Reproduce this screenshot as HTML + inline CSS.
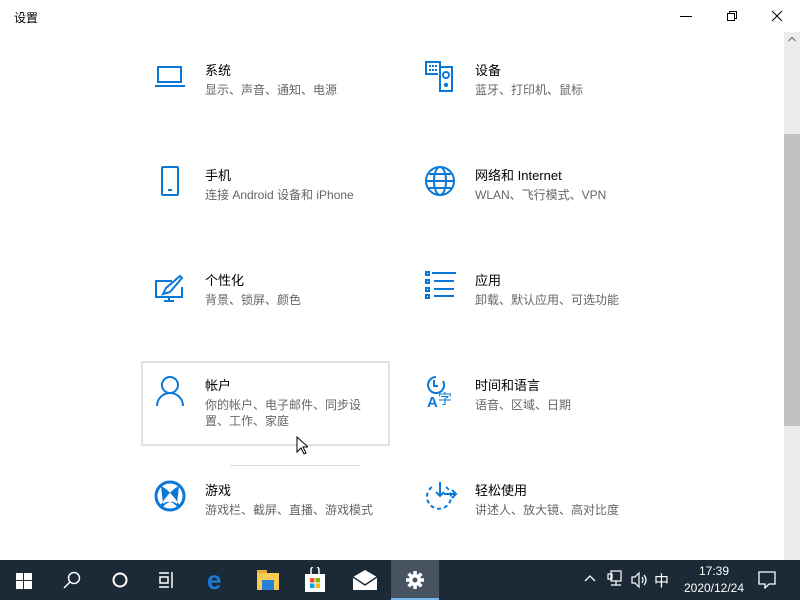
<!DOCTYPE html>
<html><head><meta charset="utf-8"><style>
*{margin:0;padding:0;box-sizing:border-box}
body{width:800px;height:600px;overflow:hidden;background:#fff;font-family:"Liberation Sans","Noto Sans CJK SC",sans-serif;position:relative}
.abs{position:absolute}
.t{font-size:13px;color:#000;line-height:16px}
.s{font-size:12px;color:#666;line-height:16px;margin-top:3px}
.item{position:absolute;width:230px}
svg{position:absolute}
.tb{position:absolute;left:0;top:560px;width:800px;height:40px;background:#1c2a37}
</style></head><body>
<div class="abs" style="left:14px;top:9px;font-size:12px">设置</div>
<div class="abs" style="left:680px;top:16px;width:12px;height:1px;background:#000"></div>
<svg style="left:726px;top:10px" width="12" height="12"><rect x="1.5" y="3.5" width="7" height="7" fill="none" stroke="#000"/><path d="M3.5 3.5V1.5h7v7h-2" fill="none" stroke="#000"/></svg>
<svg style="left:771px;top:10px" width="12" height="12"><path d="M1 1L11 11M11 1L1 11" stroke="#000"/></svg>
<div class="abs" style="left:784px;top:32px;width:16px;height:528px;background:#ebebeb"></div>
<div class="abs" style="left:784px;top:134px;width:16px;height:292px;background:#c1c1c1"></div>
<svg style="left:788px;top:36px" width="8" height="6"><path d="M0.5 5L4 1.5L7.5 5" fill="none" stroke="#666"/></svg>

<div class="abs" style="left:141px;top:361px;width:249px;height:85px;border:2px solid #e2e2e2"></div>

<!-- icons -->
<svg style="left:154px;top:64px" width="32" height="26" fill="none" stroke="#0a78d7" stroke-width="2"><rect x="4" y="3" width="23" height="15"/><path d="M1 22h30"/></svg>
<svg style="left:424px;top:60px" width="32" height="32" fill="none" stroke="#0a78d7" stroke-width="2"><path d="M16 12V2H2v12h12"/><rect x="16" y="7" width="12" height="24"/><circle cx="22" cy="15" r="3"/><circle cx="22" cy="25" r="1.2"/><path d="M5 6h8M5 10h8" stroke-dasharray="2 1"/></svg>
<svg style="left:160px;top:165px" width="20" height="32" fill="none" stroke="#0a78d7" stroke-width="2"><rect x="2" y="2" width="16" height="28" rx="1"/><path d="M8 25h4"/></svg>
<svg style="left:424px;top:165px" width="32" height="32" fill="none" stroke="#0a78d7" stroke-width="2"><circle cx="16" cy="16" r="14"/><ellipse cx="16" cy="16" rx="6" ry="14"/><path d="M2 16h28M5 9h22M5 23h22"/></svg>
<svg style="left:154px;top:274px" width="32" height="30" fill="none" stroke="#0a78d7" stroke-width="2"><path d="M18 7H2v16h26V13"/><path d="M10 27h10M15 23v4"/><path d="M9 20l3-6 14-12 2 2-12 14z"/></svg>
<svg style="left:424px;top:270px" width="32" height="30" fill="none" stroke="#0a78d7" stroke-width="2"><rect x="2" y="2" width="3" height="3"/><rect x="2" y="10" width="3" height="3"/><rect x="2" y="18" width="3" height="3"/><rect x="2" y="25" width="3" height="3"/><path d="M8 3h24M10 11h20M10 19h20M10 26h20"/></svg>
<svg style="left:155px;top:375px" width="30" height="32" fill="none" stroke="#0a78d7" stroke-width="2"><circle cx="15" cy="10" r="8"/><path d="M2 31a13 13 0 0 1 26 0"/></svg>
<svg style="left:424px;top:375px" width="34" height="34"><g fill="none" stroke="#0a78d7" stroke-width="2"><path d="M12 2a8 8 0 1 0 7 4"/><path d="M10 5v6h4"/></g><text x="3" y="32" font-size="15" font-weight="bold" fill="#0a78d7" font-family="Liberation Sans">A</text><text x="14" y="29" font-size="14" fill="#0a78d7" font-family="Noto Sans CJK SC">字</text></svg>
<svg style="left:154px;top:480px" width="32" height="32"><circle cx="16" cy="16" r="14" fill="none" stroke="#0a78d7" stroke-width="3"/><path d="M7 6q9 4 19 20l-2 2q-8-10-15-4zM25 6q-9 4 -19 20l2 2q8-10 15-4z" fill="#0a78d7"/></svg>
<svg style="left:424px;top:480px" width="34" height="32" fill="none" stroke="#0a78d7" stroke-width="2"><path d="M22 7a12 12 0 1 1 -14 0" stroke-dasharray="4 3"/><path d="M16 2v14M12 12l4 4 4-4M20 14h12M28 10l4 4-4 4"/></svg>

<div class="item" style="left:205px;top:63px"><div class="t">系统</div><div class="s">显示、声音、通知、电源</div></div>
<div class="item" style="left:475px;top:63px"><div class="t">设备</div><div class="s">蓝牙、打印机、鼠标</div></div>
<div class="item" style="left:205px;top:168px"><div class="t">手机</div><div class="s">连接 Android 设备和 iPhone</div></div>
<div class="item" style="left:475px;top:168px"><div class="t">网络和 Internet</div><div class="s">WLAN、飞行模式、VPN</div></div>
<div class="item" style="left:205px;top:273px"><div class="t">个性化</div><div class="s">背景、锁屏、颜色</div></div>
<div class="item" style="left:475px;top:273px"><div class="t">应用</div><div class="s">卸载、默认应用、可选功能</div></div>
<div class="item" style="left:205px;top:378px;width:170px"><div class="t">帐户</div><div class="s">你的帐户、电子邮件、同步设置、工作、家庭</div></div>
<div class="item" style="left:475px;top:378px"><div class="t">时间和语言</div><div class="s">语音、区域、日期</div></div>
<div class="item" style="left:205px;top:483px"><div class="t">游戏</div><div class="s">游戏栏、截屏、直播、游戏模式</div></div>
<div class="item" style="left:475px;top:483px"><div class="t">轻松使用</div><div class="s">讲述人、放大镜、高对比度</div></div>
<div class="abs" style="left:230px;top:465px;width:130px;height:1px;background:#ddd"></div>
<svg style="left:296px;top:436px" width="12" height="20"><path d="M1 1v15l4-4 3 6 2-1-3-6h5z" fill="#fff" stroke="#000"/></svg>

<div class="tb">
<svg style="left:16px;top:13px" width="16" height="16" fill="#fff"><rect x="0" y="0" width="7" height="7"/><rect x="8" y="0" width="8" height="7"/><rect x="0" y="8" width="7" height="8"/><rect x="8" y="8" width="8" height="8"/></svg>
<svg style="left:63px;top:11px" width="18" height="18" fill="none" stroke="#fff" stroke-width="1.5"><circle cx="11" cy="7" r="5.5"/><path d="M7 11l-6 6"/></svg>
<svg style="left:111px;top:11px" width="18" height="18" fill="none" stroke="#fff" stroke-width="2"><circle cx="9" cy="9" r="6.5"/></svg>
<svg style="left:158px;top:11px" width="18" height="18" fill="none" stroke="#fff" stroke-width="1.5"><path d="M1 2h10M1 16h10M2 6h8v6H2zM14 1v16"/></svg>
<div class="abs" style="left:207px;top:5px;font-size:26px;font-weight:bold;color:#1a7ad8;font-family:'Liberation Sans'">e</div>
<svg style="left:257px;top:10px" width="22" height="20"><rect x="0" y="0" width="10" height="4" fill="#e8b032"/><rect x="0" y="3" width="22" height="17" fill="#f5cb52"/><rect x="5" y="10" width="12" height="10" fill="#2a7fd6"/></svg>
<svg style="left:305px;top:7px" width="20" height="25"><path d="M6 7V3a4 4 0 0 1 8 0v4" fill="none" stroke="#fff" stroke-width="1.5"/><rect x="0" y="7" width="20" height="18" fill="#fff"/><rect x="5" y="11" width="4.5" height="4.5" fill="#f25022"/><rect x="10.5" y="11" width="4.5" height="4.5" fill="#7fba00"/><rect x="5" y="16.5" width="4.5" height="4.5" fill="#00a4ef"/><rect x="10.5" y="16.5" width="4.5" height="4.5" fill="#ffb900"/></svg>
<svg style="left:353px;top:10px" width="24" height="20"><path d="M0 7L12 0l12 7v13H0z" fill="#fff"/><path d="M0 7l12 8 12-8" fill="none" stroke="#1c2a37" stroke-width="1.5"/></svg>
<div class="abs" style="left:391px;top:0;width:48px;height:40px;background:#475460"></div>
<div class="abs" style="left:391px;top:38px;width:48px;height:2px;background:#76b9ed"></div>
<svg style="left:405px;top:10px" width="20" height="20"><g stroke="#fff" stroke-width="3.5"><path d="M10 1v18M1 10h18M3.6 3.6l12.8 12.8M16.4 3.6L3.6 16.4"/></g><circle cx="10" cy="10" r="6" fill="#fff"/><circle cx="10" cy="10" r="2.5" fill="#475460"/></svg>
<svg style="left:584px;top:14px" width="12" height="8" fill="none" stroke="#fff" stroke-width="1.3"><path d="M1 7l5-5 5 5"/></svg>
<svg style="left:607px;top:10px" width="16" height="20" fill="none" stroke="#fff" stroke-width="1.2"><rect x="4" y="1" width="10" height="10"/><rect x="1" y="4" width="4" height="5"/><path d="M9 11v4M4 15h10"/></svg>
<svg style="left:631px;top:11px" width="18" height="18" fill="none" stroke="#fff" stroke-width="1.2"><path d="M1 6h3l4-4v14l-4-4H1z"/><path d="M11 6q2 3 0 6M13 4q4 5 0 10"/></svg>
<div class="abs" style="left:654px;top:10px;font-size:15px;color:#fff">中</div>
<div class="abs" style="left:676px;top:3px;width:76px;text-align:center;font-size:12px;color:#fff;line-height:17px">17:39<br>2020/12/24</div>
<svg style="left:758px;top:11px" width="18" height="18" fill="none" stroke="#fff" stroke-width="1.3"><path d="M1 1h16v12H11l-4 4v-4H1z"/></svg>
</div>
</body></html>
